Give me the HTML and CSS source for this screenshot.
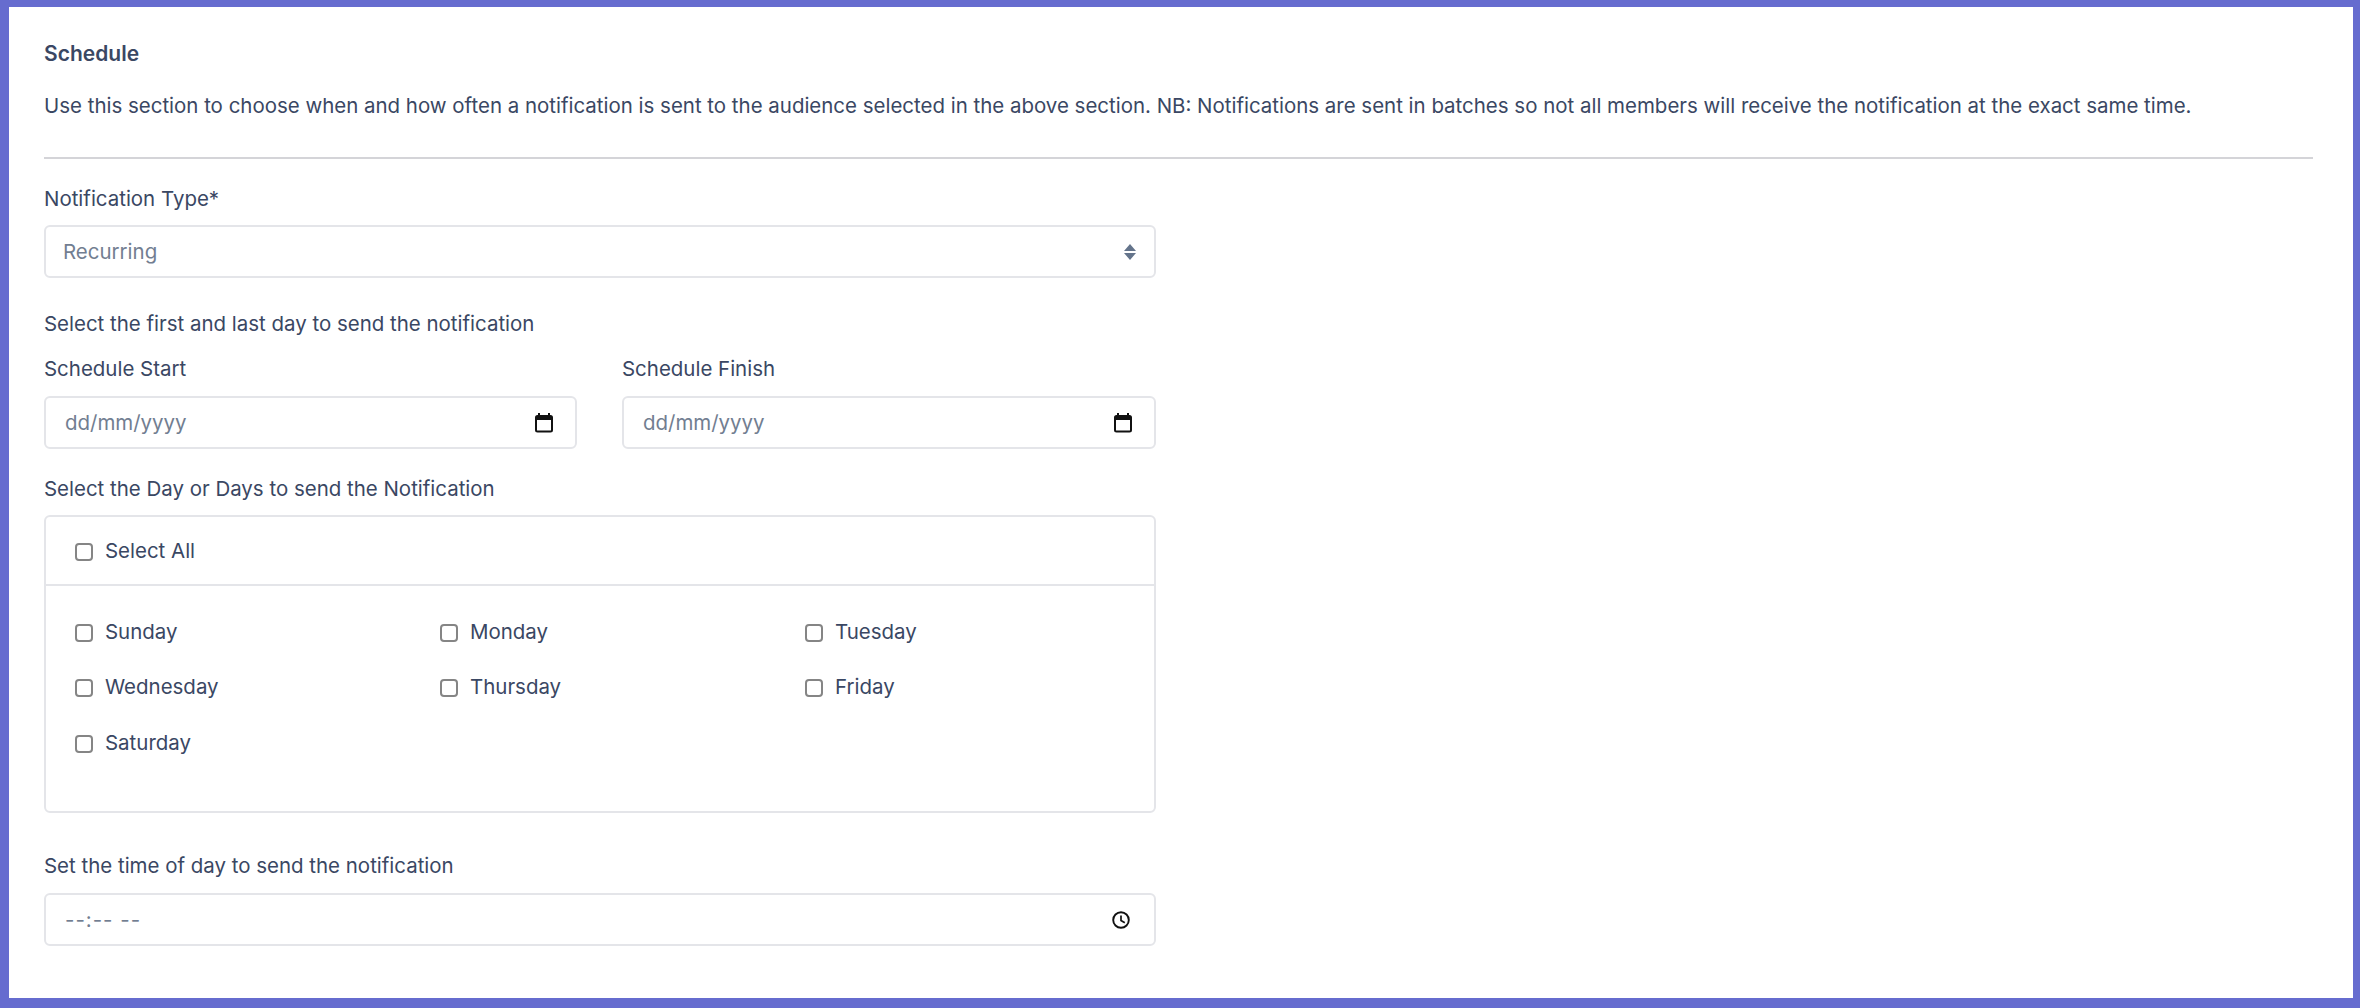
FILE: index.html
```html
<!DOCTYPE html>
<html lang="en">
<head>
<meta charset="utf-8">
<title>Schedule</title>
<link rel="stylesheet" href="styles.css">
</head>
<body>
<main class="frame">
  <h2 class="title">Schedule</h2>
  <p class="intro">Use this section to choose when and how often a notification is sent to the audience selected in the above section. NB: Notifications are sent in batches so not all members will receive the notification at the exact same time.</p>
  <hr class="rule">
  <div class="form">
    <div class="label label-type">Notification Type*</div>
    <div class="field field-select">
      <span>Recurring</span>
      <svg class="sort" width="12" height="16" viewBox="0 0 12 16"><path d="M6 0 12 7H0ZM0 9H12L6 16Z" fill="#64748b"/></svg>
    </div>
    <div class="label label-range">Select the first and last day to send the notification</div>
    <div class="dates">
      <div class="date-col">
        <div class="label">Schedule Start</div>
        <div class="field field-date">
          <span>dd/mm/yyyy</span>
          <svg class="picker" width="18" height="20" viewBox="0 0 18 20"><path d="M4 0V2M14 0V2" stroke="#111" stroke-width="2"/><rect x="1" y="3" width="16" height="15.5" rx="1.5" fill="none" stroke="#111" stroke-width="2"/><path d="M1 4H17V7H1Z" fill="#111"/></svg>
        </div>
      </div>
      <div class="date-col">
        <div class="label">Schedule Finish</div>
        <div class="field field-date">
          <span>dd/mm/yyyy</span>
          <svg class="picker" width="18" height="20" viewBox="0 0 18 20"><path d="M4 0V2M14 0V2" stroke="#111" stroke-width="2"/><rect x="1" y="3" width="16" height="15.5" rx="1.5" fill="none" stroke="#111" stroke-width="2"/><path d="M1 4H17V7H1Z" fill="#111"/></svg>
        </div>
      </div>
    </div>
    <div class="label label-days">Select the Day or Days to send the Notification</div>
    <section class="panel">
      <div class="panel-head">
        <label class="check"><input type="checkbox"><span>Select All</span></label>
      </div>
      <div class="days">
        <label class="check"><input type="checkbox"><span>Sunday</span></label>
        <label class="check"><input type="checkbox"><span>Monday</span></label>
        <label class="check"><input type="checkbox"><span>Tuesday</span></label>
        <label class="check"><input type="checkbox"><span>Wednesday</span></label>
        <label class="check"><input type="checkbox"><span>Thursday</span></label>
        <label class="check"><input type="checkbox"><span>Friday</span></label>
        <label class="check"><input type="checkbox"><span>Saturday</span></label>
      </div>
    </section>
    <div class="label label-time">Set the time of day to send the notification</div>
    <div class="field field-date field-time">
      <span class="time-mask">--:-- --</span>
      <svg class="picker" width="18" height="18" viewBox="0 0 18 18"><circle cx="9" cy="9" r="7.8" fill="none" stroke="#111" stroke-width="1.9"/><path d="M9 4.5V9.4L12.8 11.7" fill="none" stroke="#111" stroke-width="1.7"/></svg>
    </div>
  </div>
</main>
</body>
</html>
```
FILE: styles.css
```css
* { box-sizing: border-box; }
html, body { margin: 0; height: 100%; }
body {
  background: #fff;
  color: #3a4763;
  font-family: Inter, "Liberation Sans", sans-serif;
  font-size: 20.47px;
  line-height: 30px;
}
.frame {
  height: 1008px;
  border-style: solid;
  border-color: #666ccf;
  border-width: 7px 7px 10px 9px;
  padding: 32px 40px 0 35px;
  overflow: hidden;
}
.title { margin: 0; font-size: 21px; line-height: 30px; font-weight: 600; }
.intro { margin: 22px 0 0; white-space: nowrap; }
.rule { margin: 36px 0 0; border: 0; border-top: 2px solid #d4d4d8; }
.form { width: 1112px; }
.label { line-height: 30px; }
.label-type { margin-top: 25px; }
.field {
  display: flex;
  align-items: center;
  justify-content: space-between;
  height: 53px;
  border: 2px solid #e4e5e9;
  border-radius: 6px;
  color: #727e91;
  background: #fff;
}
.field-select { margin-top: 11px; padding: 0 18px 0 17px; }
.field-date { margin-top: 12px; padding: 0 22px 0 19px; }
.field-time { padding-right: 24px; }
.time-mask { letter-spacing: 1px; }
.label-range { margin-top: 31px; }
.dates { display: grid; grid-template-columns: 533px 534px; gap: 45px; margin-top: 15px; }
.label-days { margin-top: 25px; }
.panel {
  margin-top: 11px;
  height: 298px;
  border: 2px solid #e4e5e9;
  border-radius: 6px;
}
.panel-head {
  height: 69px;
  padding: 0 29px;
  display: flex;
  align-items: center;
  border-bottom: 2px solid #e4e5e9;
}
.days {
  display: grid;
  grid-template-columns: repeat(3, 365px);
  grid-auto-rows: 55.5px;
  padding: 18px 0 0 29px;
}
.check { display: flex; align-items: center; gap: 12px; }
.check input {
  appearance: none;
  width: 18px;
  height: 18px;
  margin: 2px 0 0;
  flex: none;
  background: #fff;
  border: 2px solid #858585;
  border-radius: 4px;
}
.label-time { margin-top: 38px; }
```
